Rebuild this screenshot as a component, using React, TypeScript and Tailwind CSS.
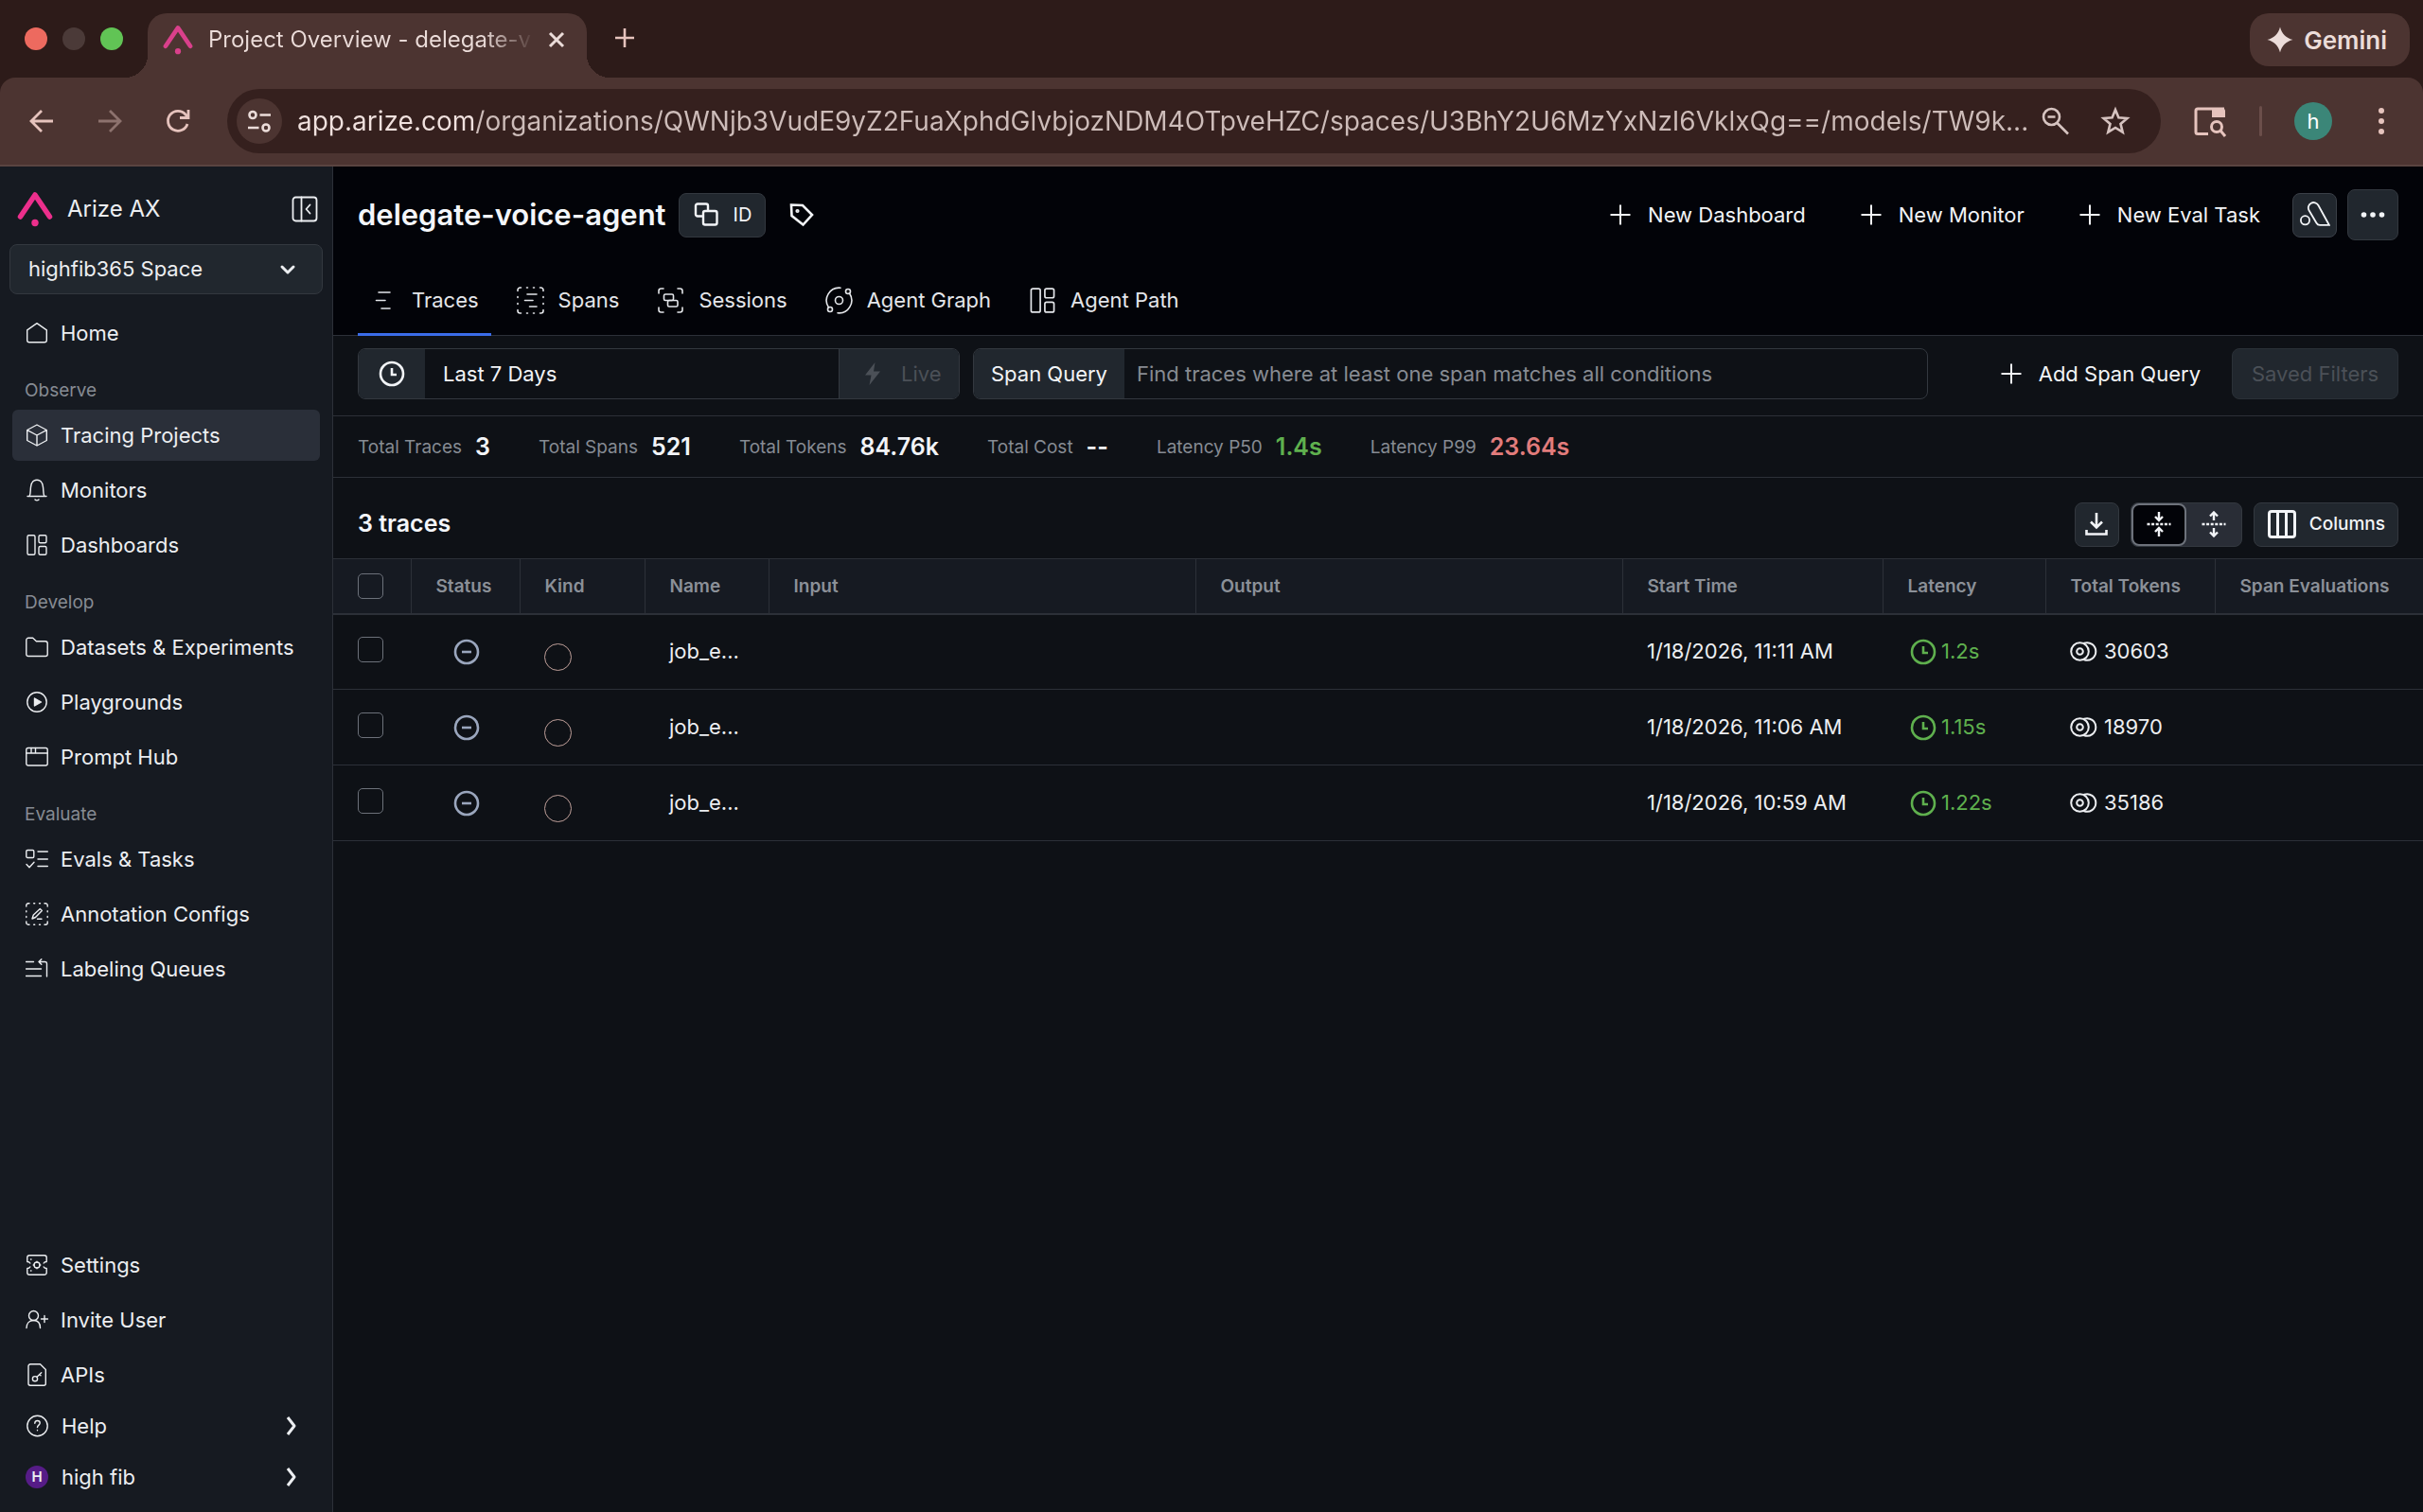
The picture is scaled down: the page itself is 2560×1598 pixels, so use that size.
import React from 'react';

interface IconProps {
  className?: string;
  box?: number;
  stroke?: number;
  children: React.ReactNode;
}

const Icon: React.FC<IconProps> = ({ className = 'size-6', box = 24, stroke = 1.4, children }) => (
  <svg
    className={`shrink-0 ${className}`}
    viewBox={`0 0 ${box} ${box}`}
    fill="none"
    stroke="currentColor"
    strokeWidth={stroke}
    strokeLinecap="round"
    strokeLinejoin="round"
    aria-hidden="true"
  >
    {children}
  </svg>
);

const ArizeMark = ({ className }: { className: string }) => (
  <svg className={`shrink-0 ${className}`} viewBox="0 0 38 38" fill="none" aria-hidden="true">
    <path d="M3.5 27 19 4l15.500 23" stroke="currentColor" strokeWidth="5.500" strokeLinecap="round" strokeLinejoin="round" />
    <circle cx="19" cy="33.500" r="3.700" fill="currentColor" />
  </svg>
);

const PlusIcon = ({ className = 'size-6' }: { className?: string }) => (
  <Icon className={className} stroke={2}>
    <path d="M12 1.500v21M1.500 12h21" strokeLinecap="butt" />
  </Icon>
);

const ClockIcon = ({ className = 'size-7' }: { className?: string }) => (
  <Icon className={className} box={28} stroke={2.6}>
    <circle cx="14" cy="14" r="12" />
    <path d="M14 8v7h5" strokeLinecap="butt" strokeLinejoin="miter" />
  </Icon>
);

const ChevronRight = () => (
  <Icon className="size-6" stroke={3}>
    <path d="m8 3 7 9-7 9" strokeLinecap="butt" />
  </Icon>
);

const DashboardsIcon = ({ className = 'size-6' }: { className?: string }) => (
  <Icon className={className}>
    <rect x="2" y="1.700" width="8" height="20.600" rx="1.500" />
    <rect x="14" y="1.700" width="8" height="8" rx="1.500" />
    <rect x="14" y="13.500" width="8" height="8.800" rx="1.500" />
  </Icon>
);

const icons = {
  home: (
    <Icon>
      <path d="M1.700 8.800 12 1.700l10.300 7.100v10.700a2.300 2.300 0 0 1-2.300 2.300H4a2.300 2.300 0 0 1-2.300-2.300z" />
    </Icon>
  ),
  cube: (
    <Icon>
      <path d="M12 1 22.300 6.500v11L12 23 1.700 17.500v-11zM1.900 6.700 12 12l10.100-5.300M12 12v11" />
    </Icon>
  ),
  bell: (
    <Icon>
      <path d="M2 18.500h20M4.200 18.300c1.300-2.800.800-6 1.300-9.500C6 4.500 8.300 1.200 12 1.200s6 3.300 6.500 7.600c.5 3.500 0 6.700 1.300 9.500M10 22c1 1 3 1 4 0" />
    </Icon>
  ),
  dashboards: <DashboardsIcon />,
  folder: (
    <Icon>
      <path d="M.800 4.500A2.300 2.300 0 0 1 3.100 2.200h4.600l3.700 3.500h9.500a2.300 2.300 0 0 1 2.300 2.300v11.500a2 2 0 0 1-2 2H2.800a2 2 0 0 1-2-2z" />
    </Icon>
  ),
  play: (
    <Icon>
      <circle cx="12" cy="12" r="10.200" />
      <path d="m9.500 8 7 4-7 4z" fill="currentColor" />
    </Icon>
  ),
  promptHub: (
    <Icon>
      <rect x=".8" y="2.500" width="22.400" height="18.500" rx="2" />
      <path d="M.8 8h22.400M6 2.500V8M10.500 2.500V8" />
    </Icon>
  ),
  evals: (
    <Icon>
      <rect x=".8" y="2.500" width="8" height="8" rx="1.300" />
      <path d="m1 17.500 3 3.200 5-5.500M13 4h10.300M13 12h10.300M13 19.500h10.300" />
    </Icon>
  ),
  annotation: (
    <Icon>
      <path d="M.8 4V2.800a2 2 0 0 1 2-2H4M20 .8h1.200a2 2 0 0 1 2 2V4M23.200 20v1.200a2 2 0 0 1-2 2H20M4 23.200H2.800a2 2 0 0 1-2-2V20M8.700.8h1M14.500.8h1M8.700 23.200h1M14.500 23.200h1M.8 8.700v1M.8 14.500v1M23.200 8.700v1M23.200 14.500v1" />
      <path d="m7 17 1.300-4 7-6.500 2 2-6.800 7zM12.500 17.300H17" />
    </Icon>
  ),
  queues: (
    <Icon>
      <path d="M.5 4.500h8M.5 12h16M.5 19.500h16M22.500 20V6.500a2 2 0 0 0-2-2H14M16.800 1.800 14 4.500l2.800 2.700" />
    </Icon>
  ),
  settings: (
    <Icon>
      <path d="M1.800 8.500V4a2.300 2.300 0 0 1 2.300-2.300h15.800A2.300 2.300 0 0 1 22.200 4v4.500c-1.500 0-2.500.500-3 1.500M1.800 8.500c1.500 0 2.500.500 3 1.500M22.200 15.500V20a2.300 2.300 0 0 1-2.300 2.300H4.100A2.300 2.300 0 0 1 1.800 20v-4.500c1.500 0 2.500-.500 3-1.500M22.200 15.500c-1.500 0-2.500-.500-3-1.500M5.500 6h.500M5.500 18h.500" />
      <circle cx="12" cy="12" r="3" />
      <path d="M12 8.200v.8M12 15v.8M8.200 12H9M15 12h.8" />
    </Icon>
  ),
  invite: (
    <Icon>
      <circle cx="8.500" cy="7.500" r="5" />
      <path d="M1 20.500c0-5 3-8 7.500-8s7 3 7 8M16.500 11h7M20 7.500v7" />
    </Icon>
  ),
  api: (
    <Icon>
      <path d="M3 2.800a2 2 0 0 1 2-2h10.500L21.300 6.500v14.700a2 2 0 0 1-2 2H5a2 2 0 0 1-2-2z" />
      <circle cx="10" cy="16.200" r="2.600" />
      <path d="m12 14.200 4.700-4.500M14.800 11.500l1.200 1.200" />
    </Icon>
  ),
  help: (
    <Icon>
      <circle cx="12.500" cy="12" r="10.700" />
      <path d="M9.800 9.300c0-1.700 1.200-2.800 2.700-2.800s2.700 1 2.700 2.600c0 2-2.700 2.100-2.700 4.400M12.500 16.400v.3" />
    </Icon>
  ),
};

interface NavItem {
  label: string;
  icon: React.ReactNode;
  active?: boolean;
}

const sections: { title: string; items: NavItem[] }[] = [
  {
    title: 'Observe',
    items: [
      { label: 'Tracing Projects', icon: icons.cube, active: true },
      { label: 'Monitors', icon: icons.bell },
      { label: 'Dashboards', icon: icons.dashboards },
    ],
  },
  {
    title: 'Develop',
    items: [
      { label: 'Datasets & Experiments', icon: icons.folder },
      { label: 'Playgrounds', icon: icons.play },
      { label: 'Prompt Hub', icon: icons.promptHub },
    ],
  },
  {
    title: 'Evaluate',
    items: [
      { label: 'Evals & Tasks', icon: icons.evals },
      { label: 'Annotation Configs', icon: icons.annotation },
      { label: 'Labeling Queues', icon: icons.queues },
    ],
  },
];

const accountItems: NavItem[] = [
  { label: 'Settings', icon: icons.settings },
  { label: 'Invite User', icon: icons.invite },
  { label: 'APIs', icon: icons.api },
];

const tabs: NavItem[] = [
  {
    label: 'Traces',
    active: true,
    icon: (
      <Icon className="size-[29px]" box={29} stroke={1.6}>
        <path d="M9 6h12M6.500 14.500H16M12 23h9" />
      </Icon>
    ),
  },
  {
    label: 'Spans',
    icon: (
      <Icon className="size-[29px]" box={29} stroke={1.6}>
        <path d="M1 4.500V3.500a2.500 2.500 0 0 1 2.500-2.500h1M24.500 1h1A2.500 2.500 0 0 1 28 3.500v1M28 24.500v1a2.500 2.500 0 0 1-2.500 2.500h-1M4.500 28h-1A2.500 2.500 0 0 1 1 25.500v-1M10.500 1h1M17.500 1h1M10.500 28h1M17.500 28h1M1 10.500v1M1 17.500v1M28 10.500v1M28 17.500v1" />
        <path d="M11 8h10M8.500 14.500H17M13.500 21h7.500" />
      </Icon>
    ),
  },
  {
    label: 'Sessions',
    icon: (
      <Icon className="size-[29px]" box={29} stroke={1.6}>
        <path d="M2 7V4.500A2.500 2.500 0 0 1 4.500 2H7M22 2h2.500A2.500 2.500 0 0 1 27 4.500V7M27 22v2.500a2.500 2.500 0 0 1-2.500 2.500H22M7 27H4.500A2.500 2.500 0 0 1 2 24.500V22" />
        <rect x="7.500" y="8" width="10" height="6.500" rx="1.500" />
        <rect x="11.500" y="14.500" width="10.500" height="6.500" rx="1.500" />
      </Icon>
    ),
  },
  {
    label: 'Agent Graph',
    icon: (
      <Icon className="size-[29px]" box={29} stroke={1.6}>
        <circle cx="14.500" cy="14.500" r="4" />
        <circle cx="24" cy="5" r="2.500" />
        <circle cx="5" cy="24" r="2.500" />
        <path d="M16 1.200A13.400 13.400 0 0 0 3.500 22M25.500 7A13.400 13.400 0 0 1 13 27.800" />
      </Icon>
    ),
  },
  { label: 'Agent Path', icon: <DashboardsIcon className="size-[29px]" /> },
];

const stats = [
  { label: 'Total Traces', value: '3', color: 'text-[#f2f4f7]' },
  { label: 'Total Spans', value: '521', color: 'text-[#f2f4f7]' },
  { label: 'Total Tokens', value: '84.76k', color: 'text-[#f2f4f7]' },
  { label: 'Total Cost', value: '--', color: 'text-[#f2f4f7]' },
  { label: 'Latency P50', value: '1.4s', color: 'text-[#5fb04e]' },
  { label: 'Latency P99', value: '23.64s', color: 'text-[#e27c7c]' },
];

const columns = [
  { label: 'Status', width: 'w-[115px]' },
  { label: 'Kind', width: 'w-[132px]' },
  { label: 'Name', width: 'w-[131px]' },
  { label: 'Input', width: 'w-[451px]' },
  { label: 'Output', width: 'w-[451px]' },
  { label: 'Start Time', width: 'w-[275px]' },
  { label: 'Latency', width: 'w-[172px]' },
  { label: 'Total Tokens', width: 'w-[179px]' },
  { label: 'Span Evaluations', width: '' },
];

const traces = [
  { name: 'job_e...', start: '1/18/2026, 11:11 AM', latency: '1.2s', tokens: '30603' },
  { name: 'job_e...', start: '1/18/2026, 11:06 AM', latency: '1.15s', tokens: '18970' },
  { name: 'job_e...', start: '1/18/2026, 10:59 AM', latency: '1.22s', tokens: '35186' },
];

const BrowserChrome = () => (
  <header className="bg-[#2d1b19] text-[#e6c3bd]">
    <div className="flex h-[82px] items-end">
      <div className="flex h-[82px] w-[156px] shrink-0 items-center gap-4 pl-[26px]">
        <span className="size-6 rounded-full bg-[#ed6a5f]" />
        <span className="size-6 rounded-full bg-[#4b3a38]" />
        <span className="size-6 rounded-full bg-[#61c455]" />
      </div>
      <div className="relative flex h-[68px] w-[464px] items-center rounded-t-[20px] bg-[#4c3431] pr-5 pb-3 pl-4 before:absolute before:bottom-0 before:-left-6 before:size-6 before:bg-[radial-gradient(circle_at_0_0,transparent_24px,#4c3431_24px)] after:absolute after:-right-6 after:bottom-0 after:size-6 after:bg-[radial-gradient(circle_at_100%_0,transparent_24px,#4c3431_24px)]">
        <ArizeMark className="size-8 text-[#d9408b]" />
        <span className="ml-4 bg-[linear-gradient(90deg,#ebdcd9_290px,transparent_345px)] bg-clip-text text-[24px] leading-8 whitespace-nowrap text-transparent">
          Project Overview - delegate-v
        </span>
        <button type="button" aria-label="Close tab" className="ml-auto text-[#ebdcd9]">
          <Icon className="size-6" stroke={3}>
            <path d="m5 5 14 14M19 5 5 19" strokeLinecap="butt" />
          </Icon>
        </button>
      </div>
      <button type="button" aria-label="New tab" className="mb-[30px] ml-7">
        <Icon className="size-6" stroke={2.6}>
          <path d="M12 2v20M2 12h20" strokeLinecap="butt" />
        </Icon>
      </button>
      <button
        type="button"
        className="mr-[14px] mb-3 ml-auto flex h-14 items-center gap-[11px] rounded-[20px] bg-[#4c3431] pr-6 pl-[18px] text-[26px] font-semibold text-[#ebdcd9]"
      >
        <svg className="size-7 shrink-0" viewBox="0 0 28 28" fill="currentColor" aria-hidden="true">
          <path d="M14 .5C16 8 20 12 27.500 14 20 16 16 20 14 27.500 12 20 8 16 .5 14 8 12 12 8 14 .5z" />
        </svg>
        Gemini
      </button>
    </div>
    <div className="flex h-[94px] items-center rounded-t-2xl border-b-2 border-[#5a4441] bg-[#4c3431] pr-7 pl-7">
      <button type="button" aria-label="Back">
        <Icon className="size-8" box={32} stroke={2.8}>
          <path d="M28 16H6M16 5 5 16l11 11" strokeLinecap="butt" strokeLinejoin="miter" />
        </Icon>
      </button>
      <button type="button" aria-label="Forward" disabled className="ml-10 text-[#8d726e]">
        <Icon className="size-8" box={32} stroke={2.8}>
          <path d="M4 16h22M16 5l11 11-11 11" strokeLinecap="butt" strokeLinejoin="miter" />
        </Icon>
      </button>
      <button type="button" aria-label="Reload" className="ml-10">
        <Icon className="size-8" box={32} stroke={2.8}>
          <path d="M26 19A10.500 10.500 0 1 1 24 9l3 3M27 4v8.500h-9" strokeLinecap="butt" strokeLinejoin="miter" />
        </Icon>
      </button>
      <div className="ml-9 flex h-[68px] flex-1 items-center rounded-full bg-[#35201e] pr-8 pl-[10px]">
        <button
          type="button"
          aria-label="Site information"
          className="flex size-12 shrink-0 items-center justify-center rounded-full bg-[#4c3431] text-[#ebdcd9]"
        >
          <Icon className="size-7" box={28} stroke={2.6}>
            <circle cx="7" cy="7.500" r="3.500" />
            <path d="M14.500 7.500H26M2 21h11.500" strokeLinecap="butt" />
            <circle cx="21" cy="21" r="3.500" />
          </Icon>
        </button>
        <input
          type="text"
          aria-label="Address"
          defaultValue="app.arize.com/organizations/QWNjb3VudE9yZ2FuaXphdGlvbjozNDM4OTpveHZC/spaces/U3BhY2U6MzYxNzI6VklxQg==/models/TW9k..."
          className="ml-4 min-w-0 flex-1 bg-[linear-gradient(90deg,#f0e1de_188px,#cdbcb9_188px)] bg-clip-text text-[28px] leading-10 text-transparent outline-none"
        />
        <div className="ml-1 flex items-center gap-8 text-[#d6c3c0]">
          <button type="button" aria-label="Zoom">
            <Icon className="size-8" box={32} stroke={2.6}>
              <circle cx="12.500" cy="11.500" r="8.500" />
              <path d="M18.500 18 30 29.500M8.500 11.500h8" strokeLinecap="butt" />
            </Icon>
          </button>
          <button type="button" aria-label="Bookmark this tab">
            <Icon className="size-8" box={32} stroke={2.6}>
              <path
                d="m16 4 3.400 8.300 9 .7-6.900 5.900 2.200 8.800L16 23l-7.700 4.700 2.200-8.800L3.600 13l9-.7z"
                strokeLinejoin="miter"
              />
            </Icon>
          </button>
        </div>
      </div>
      <button type="button" aria-label="Search side panel" className="ml-[34px]">
        <Icon className="size-9" box={36} stroke={3}>
          <path d="M16 31.500H5a2 2 0 0 1-2-2V7a2 2 0 0 1 2-2h28" strokeLinecap="butt" />
          <path d="M20 5h12a2 2 0 0 1 2 2v7H20z" fill="currentColor" stroke="none" />
          <circle cx="25" cy="24" r="5.500" />
          <path d="m29 28 5 6" strokeLinecap="butt" />
        </Icon>
      </button>
      <span className="mx-[34px] h-8 w-[3px] rounded bg-[#6b4e4a]" />
      <button type="button" aria-label="Profile" className="size-10 rounded-full bg-[#3b8678] text-[22px] text-white">
        h
      </button>
      <button type="button" aria-label="Browser menu" className="ml-9">
        <svg className="h-8 w-8" viewBox="0 0 32 32" fill="currentColor" aria-hidden="true">
          <circle cx="16" cy="5" r="3" />
          <circle cx="16" cy="16" r="3" />
          <circle cx="16" cy="27" r="3" />
        </svg>
      </button>
    </div>
  </header>
);

const NavLink = ({ item }: { item: NavItem }) => (
  <a
    href="#"
    aria-current={item.active ? 'page' : undefined}
    className={`flex h-[54px] items-center gap-[13px] rounded-md pl-[14px] whitespace-nowrap ${
      item.active ? 'bg-[#2a2f39]' : ''
    }`}
  >
    {item.icon}
    {item.label}
  </a>
);

const Sidebar = () => (
  <aside className="flex w-[352px] shrink-0 flex-col border-r border-[#2c3038] bg-[#161a21] pb-[10px] text-[22px] text-[#eceef1]">
    <div className="mt-[25px] mb-[17px] flex h-10 items-center pr-[15px] pl-[18px]">
      <ArizeMark className="size-[38px] text-[#ec2f8c]" />
      <span className="ml-[15px] text-[24px]">Arize AX</span>
      <button type="button" aria-label="Collapse sidebar" className="ml-auto">
        <Icon className="size-[28px]" box={28} stroke={1.8}>
          <rect x="1.500" y="1.500" width="25" height="25" rx="3" />
          <path d="M10.500 1.500v25M19.500 9.500 15.500 14l4 4.500" />
        </Icon>
      </button>
    </div>
    <button
      type="button"
      aria-haspopup="listbox"
      className="mx-[10px] flex h-[53px] items-center justify-between rounded-lg border border-[#33383f] bg-[#21272e] pr-6 pl-[19px]"
    >
      highfib365 Space
      <Icon className="size-6" stroke={3}>
        <path d="m6 9 6 6 6-6" />
      </Icon>
    </button>
    <nav className="mt-[14px] flex flex-1 flex-col pr-[13px] pl-[13px]">
      <NavLink item={{ label: 'Home', icon: icons.home }} />
      {sections.map((section) => (
        <section key={section.title}>
          <h2 className="flex h-[54px] items-end pb-[6px] pl-[13px] text-[19px] leading-7 text-[#868b93]">{section.title}</h2>
          <div className="flex flex-col gap-1">
            {section.items.map((item) => (
              <NavLink key={item.label} item={item} />
            ))}
          </div>
        </section>
      ))}
      <div className="mt-auto flex flex-col gap-1">
        {accountItems.map((item) => (
          <NavLink key={item.label} item={item} />
        ))}
      </div>
      <button type="button" className="flex h-[54px] items-center gap-[14px] pr-[18px] pl-[14px]">
        {icons.help}
        Help
        <span className="ml-auto">
          <ChevronRight />
        </span>
      </button>
      <button type="button" className="flex h-[54px] items-center gap-[14px] pr-[18px] pl-[14px]">
        <span className="flex size-6 items-center justify-center rounded-full bg-[#561c87] text-[15px] font-semibold">
          H
        </span>
        high fib
        <span className="ml-auto">
          <ChevronRight />
        </span>
      </button>
    </nav>
  </aside>
);

const ProjectHeader = () => (
  <div className="border-b border-[#2c3038] bg-[#020308]">
    <div className="flex items-center pt-6 pr-[26px] pl-[26px]">
      <h1 className="text-[31px] leading-[54px] font-semibold text-[#f4f6fa]">delegate-voice-agent</h1>
      <button
        type="button"
        className="ml-[13px] flex h-[47px] items-center gap-[15px] rounded-lg border border-[#33383f] bg-[#21272e] px-[14px] text-[20px]"
      >
        <Icon className="size-7" box={28} stroke={2.4}>
          <rect x="3" y="2.500" width="13" height="13" rx="2" />
          <path d="M13 10h10.500a2 2 0 0 1 2 2v10.500a2 2 0 0 1-2 2H13a2 2 0 0 1-2-2V12a2 2 0 0 1 2-2z" fill="#21272e" />
        </Icon>
        ID
      </button>
      <button type="button" aria-label="Add tag" className="ml-[24px]">
        <Icon className="size-7" box={28} stroke={2.6}>
          <path d="M3 3.500 15 4l10 10-9.500 10.500L3.500 15z" strokeLinejoin="miter" />
          <circle cx="9.500" cy="10" r=".8" fill="currentColor" />
        </Icon>
      </button>
      <div className="ml-auto flex items-center gap-[11px] text-[22px] whitespace-nowrap">
        {['New Dashboard', 'New Monitor', 'New Eval Task'].map((label) => (
          <button key={label} type="button" className="flex h-[54px] items-center gap-[17px] px-[23px]">
            <PlusIcon />
            {label}
          </button>
        ))}
        <button
          type="button"
          aria-label="Open Alyx"
          className="flex size-[47px] items-center justify-center rounded-lg border border-[#3a3f47] bg-[#21272e]"
        >
          <Icon className="size-8" box={32} stroke={1.8}>
            <path d="M9.500 11.300A5.500 5.500 0 0 1 19.400 6l11.400 20.800H21a4 4 0 0 1-3.500-2.100z" strokeLinejoin="miter" />
            <circle cx="5.500" cy="21.800" r="4.600" />
          </Icon>
        </button>
        <button
          type="button"
          aria-label="More actions"
          className="flex size-[54px] items-center justify-center rounded-lg border border-[#33383f] bg-[#21272e]"
        >
          <svg className="size-7" viewBox="0 0 28 28" fill="currentColor" aria-hidden="true">
            <circle cx="4.500" cy="14" r="2.800" />
            <circle cx="14" cy="14" r="2.800" />
            <circle cx="23.500" cy="14" r="2.800" />
          </svg>
        </button>
      </div>
    </div>
    <div role="tablist" className="mt-[25px] flex gap-[14px] pl-[26px] text-[22px]">
      {tabs.map((tab) => (
        <button
          key={tab.label}
          type="button"
          role="tab"
          aria-selected={tab.active ?? false}
          className={`-mb-px flex h-[76px] items-center gap-[15px] border-b-3 px-[13px] pt-[3px] text-[#e4e6ea] ${
            tab.active ? 'border-[#3b6ce8]' : 'border-transparent'
          }`}
        >
          {tab.icon}
          {tab.label}
        </button>
      ))}
    </div>
  </div>
);

const FilterBar = () => (
  <div className="flex h-[85px] border-b border-[#2c3038] px-[26px] pt-[13px] text-[22px] whitespace-nowrap">
    <div className="flex h-[54px] w-[636px] overflow-hidden rounded-lg border border-[#33383f]">
      <label htmlFor="range" className="flex w-[70px] items-center justify-center bg-[#21272e]">
        <ClockIcon />
      </label>
      <input id="range" type="text" aria-label="Time range" defaultValue="Last 7 Days" className="min-w-0 flex-1 pl-[19px] outline-none" />
      <button
        type="button"
        disabled
        className="flex w-[127px] items-center gap-[18px] border-l border-[#33383f] bg-[#21272e] pl-[23px] text-[#4b5057]"
      >
        <svg className="size-6" viewBox="0 0 24 24" fill="currentColor" aria-hidden="true">
          <path d="M14.500 0 4 13.500h6.500L8.500 24 20 9.500h-7z" />
        </svg>
        Live
      </button>
    </div>
    <div className="ml-[14px] flex h-[54px] min-w-0 flex-1 overflow-hidden rounded-lg border border-[#33383f]">
      <label htmlFor="span-query" className="flex w-[159px] shrink-0 items-center justify-center bg-[#21272e]">
        Span Query
      </label>
      <input
        id="span-query"
        type="text"
        placeholder="Find traces where at least one span matches all conditions"
        className="min-w-0 flex-1 pl-[13px] outline-none placeholder:text-[#878b92]"
      />
    </div>
    <button type="button" className="ml-[52px] flex h-[54px] items-center gap-[17px] px-6">
      <PlusIcon />
      Add Span Query
    </button>
    <button
      type="button"
      disabled
      className="ml-[9px] h-[54px] w-[176px] rounded-lg border border-[#2a3037] bg-[#21272e] text-[#4b5057]"
    >
      Saved Filters
    </button>
  </div>
);

const StatsBar = () => (
  <dl className="flex h-[65px] items-center gap-[51px] border-b border-[#2c3038] pt-[2px] pl-[26px]">
    {stats.map((stat) => (
      <div key={stat.label} className="flex items-center gap-[14px]">
        <dt className="text-[19px] text-[#868b93]">{stat.label}</dt>
        <dd className={`text-[25px] font-semibold ${stat.color}`}>{stat.value}</dd>
      </div>
    ))}
  </dl>
);

const TableToolbar = () => (
  <div className="flex h-[85px] items-center pt-[13px] pr-[26px] pl-[26px]">
    <h2 className="text-[25px] font-semibold text-[#f4f6fa]">3 traces</h2>
    <button
      type="button"
      aria-label="Download"
      className="ml-auto flex size-[47px] items-center justify-center rounded-lg border border-[#33383f] bg-[#21272e]"
    >
      <Icon className="size-7" box={28} stroke={2.6}>
        <path d="M14 2v15M8 11.500l6 6 6-6M3.500 20v4.500h21V20" strokeLinecap="butt" strokeLinejoin="miter" />
      </Icon>
    </button>
    <div className="ml-3 flex h-[47px] w-[118px] rounded-lg border border-[#33383f] bg-[#292d36]">
      <button
        type="button"
        aria-label="Collapse rows"
        aria-pressed="true"
        className="flex w-[58px] items-center justify-center rounded-lg border-2 border-[#6d727b] bg-[#020308]"
      >
        <Icon className="size-7" box={28} stroke={2.4}>
          <path d="M14 1v8M10 6l4 4 4-4M14 27v-8M10 22l4-4 4 4" strokeLinecap="butt" strokeLinejoin="miter" />
          <path d="M1.500 14h25" strokeDasharray="3 1.600" strokeLinecap="butt" />
        </Icon>
      </button>
      <button type="button" aria-label="Expand rows" aria-pressed="false" className="flex w-[58px] items-center justify-center">
        <Icon className="size-7" box={28} stroke={2.4}>
          <path d="M14 10V2M10 5.500l4-4 4 4M14 18v8M10 22.500l4 4 4-4" strokeLinecap="butt" strokeLinejoin="miter" />
          <path d="M1.500 14h25" strokeDasharray="3 1.600" strokeLinecap="butt" />
        </Icon>
      </button>
    </div>
    <button
      type="button"
      className="ml-3 flex h-[47px] items-center gap-[13px] rounded-lg border border-[#33383f] bg-[#21272e] px-[13px] text-[19px] font-medium"
    >
      <Icon className="size-8" box={32} stroke={3}>
        <rect x="2.500" y="2.500" width="27" height="27" rx="2.500" />
        <path d="M11.500 3v26M20.500 3v26" />
      </Icon>
      Columns
    </button>
  </div>
);

const Checkbox = ({ label }: { label: string }) => (
  <input
    type="checkbox"
    aria-label={label}
    className="block size-[27px] appearance-none rounded-[5px] border border-[#6c717a]"
  />
);

const TraceTable = () => (
  <table className="w-full table-fixed border-collapse text-left">
    <thead>
      <tr className="h-[58px] border-t border-b-2 border-[#2c3038] bg-[#161a22] text-[19px] text-[#8b9098]">
        <th className="w-[82px] pl-[26px]">
          <Checkbox label="Select all traces" />
        </th>
        {columns.map((column) => (
          <th
            key={column.label}
            scope="col"
            className={`border-l border-[#2c3038] pt-[2px] pl-[26px] font-semibold whitespace-nowrap ${column.width}`}
          >
            {column.label}
          </th>
        ))}
      </tr>
    </thead>
    <tbody className="text-[22px] text-[#eceef1]">
      {traces.map((trace) => (
        <tr key={trace.start} className="h-20 border-b border-[#2c3038]">
          <td className="pb-1 pl-[26px]">
            <Checkbox label={`Select trace ${trace.start}`} />
          </td>
          <td className="pl-[45px] text-[#9aa6bd]">
            <Icon className="size-7" box={28} stroke={2.6}>
              <circle cx="14" cy="14" r="12" />
              <path d="M9 14h10" strokeLinecap="butt" />
            </Icon>
          </td>
          <td className="pt-3 pl-[26px]">
            <span className="block size-[29px] rounded-full border border-[#c0a09a]" />
          </td>
          <td className="pl-[26px] whitespace-nowrap">{trace.name}</td>
          <td />
          <td />
          <td className="pl-[26px] whitespace-nowrap">{trace.start}</td>
          <td className="pl-[29px] text-[#5fb04e]">
            <span className="flex items-center gap-[5px]">
              <ClockIcon />
              {trace.latency}
            </span>
          </td>
          <td className="pl-[26px]">
            <span className="flex items-center gap-[7px]">
              <Icon className="size-[29px]" box={29} stroke={2}>
                <circle cx="10.500" cy="14.500" r="9.300" />
                <circle cx="10.500" cy="14.500" r="3.300" />
                <path d="M15 5.700a9.300 9.300 0 1 1 0 17.600" />
              </Icon>
              {trace.tokens}
            </span>
          </td>
          <td />
        </tr>
      ))}
    </tbody>
  </table>
);

export default function App() {
  return (
    <div className="flex min-h-screen flex-col bg-[#0e1116] font-[Inter,sans-serif] text-[#f2f4f7]">
      <BrowserChrome />
      <div className="flex flex-1">
        <Sidebar />
        <main className="min-w-0 flex-1 overflow-hidden">
          <ProjectHeader />
          <FilterBar />
          <StatsBar />
          <TableToolbar />
          <TraceTable />
        </main>
      </div>
    </div>
  );
}
